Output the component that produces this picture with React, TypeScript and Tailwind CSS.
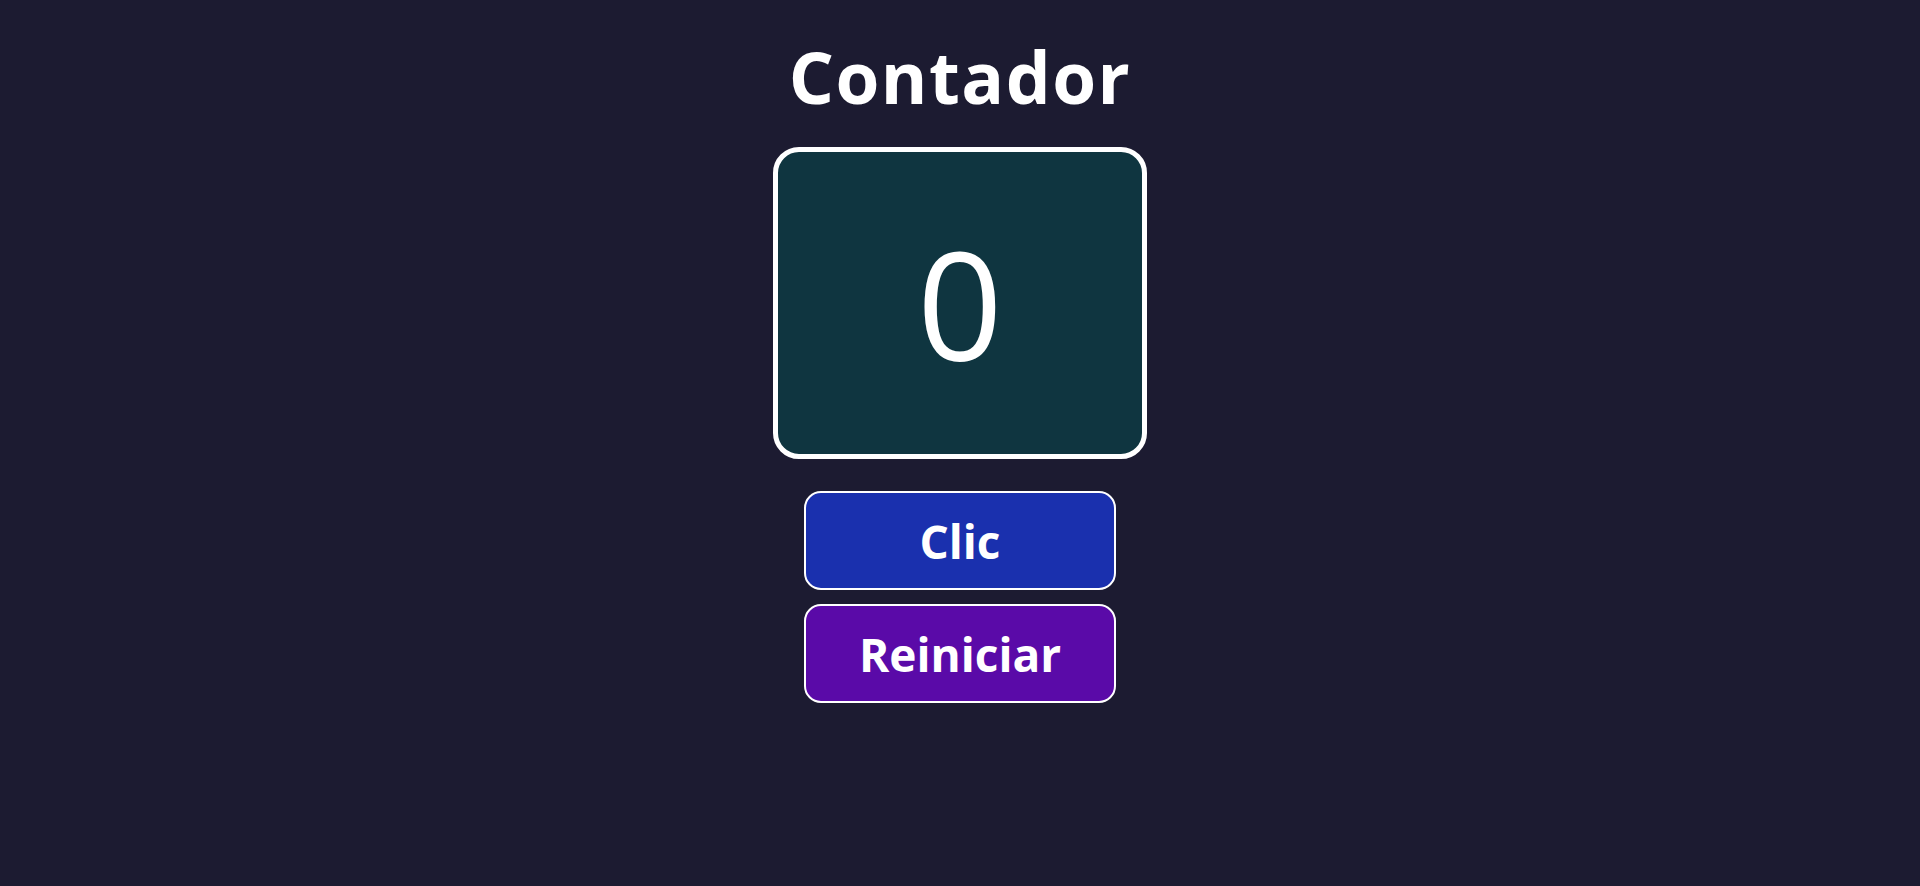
import { useState } from "react";

export default function App() {
  const [count, setCount] = useState(0);

  return (
    <main
      className="min-h-screen w-full bg-[#1c1b31] flex flex-col items-center pt-[41px] text-white"
      style={{ fontFamily: '"Open Sans", "Noto Sans", sans-serif' }}
    >
      <h1 className="text-[71px] leading-none font-bold tracking-[1.5px]">Contador</h1>

      <div className="mt-[35px] w-[374px] h-[312px] rounded-[26px] border-[5px] border-white bg-[#0f3540] flex items-center justify-center">
        <span className="text-[150px] leading-none font-normal">{count}</span>
      </div>

      <div className="mt-[32px] flex flex-col gap-[14px]">
        <button
          onClick={() => setCount(count + 1)}
          className="w-[312px] h-[99px] rounded-[17px] border-2 border-white bg-[#1a30ae] text-[46px] font-bold leading-none flex items-center justify-center"
        >
          Clic
        </button>
        <button
          onClick={() => setCount(0)}
          className="w-[312px] h-[99px] rounded-[17px] border-2 border-white bg-[#5a0aa8] text-[46px] font-bold leading-none flex items-center justify-center"
        >
          Reiniciar
        </button>
      </div>
    </main>
  );
}
